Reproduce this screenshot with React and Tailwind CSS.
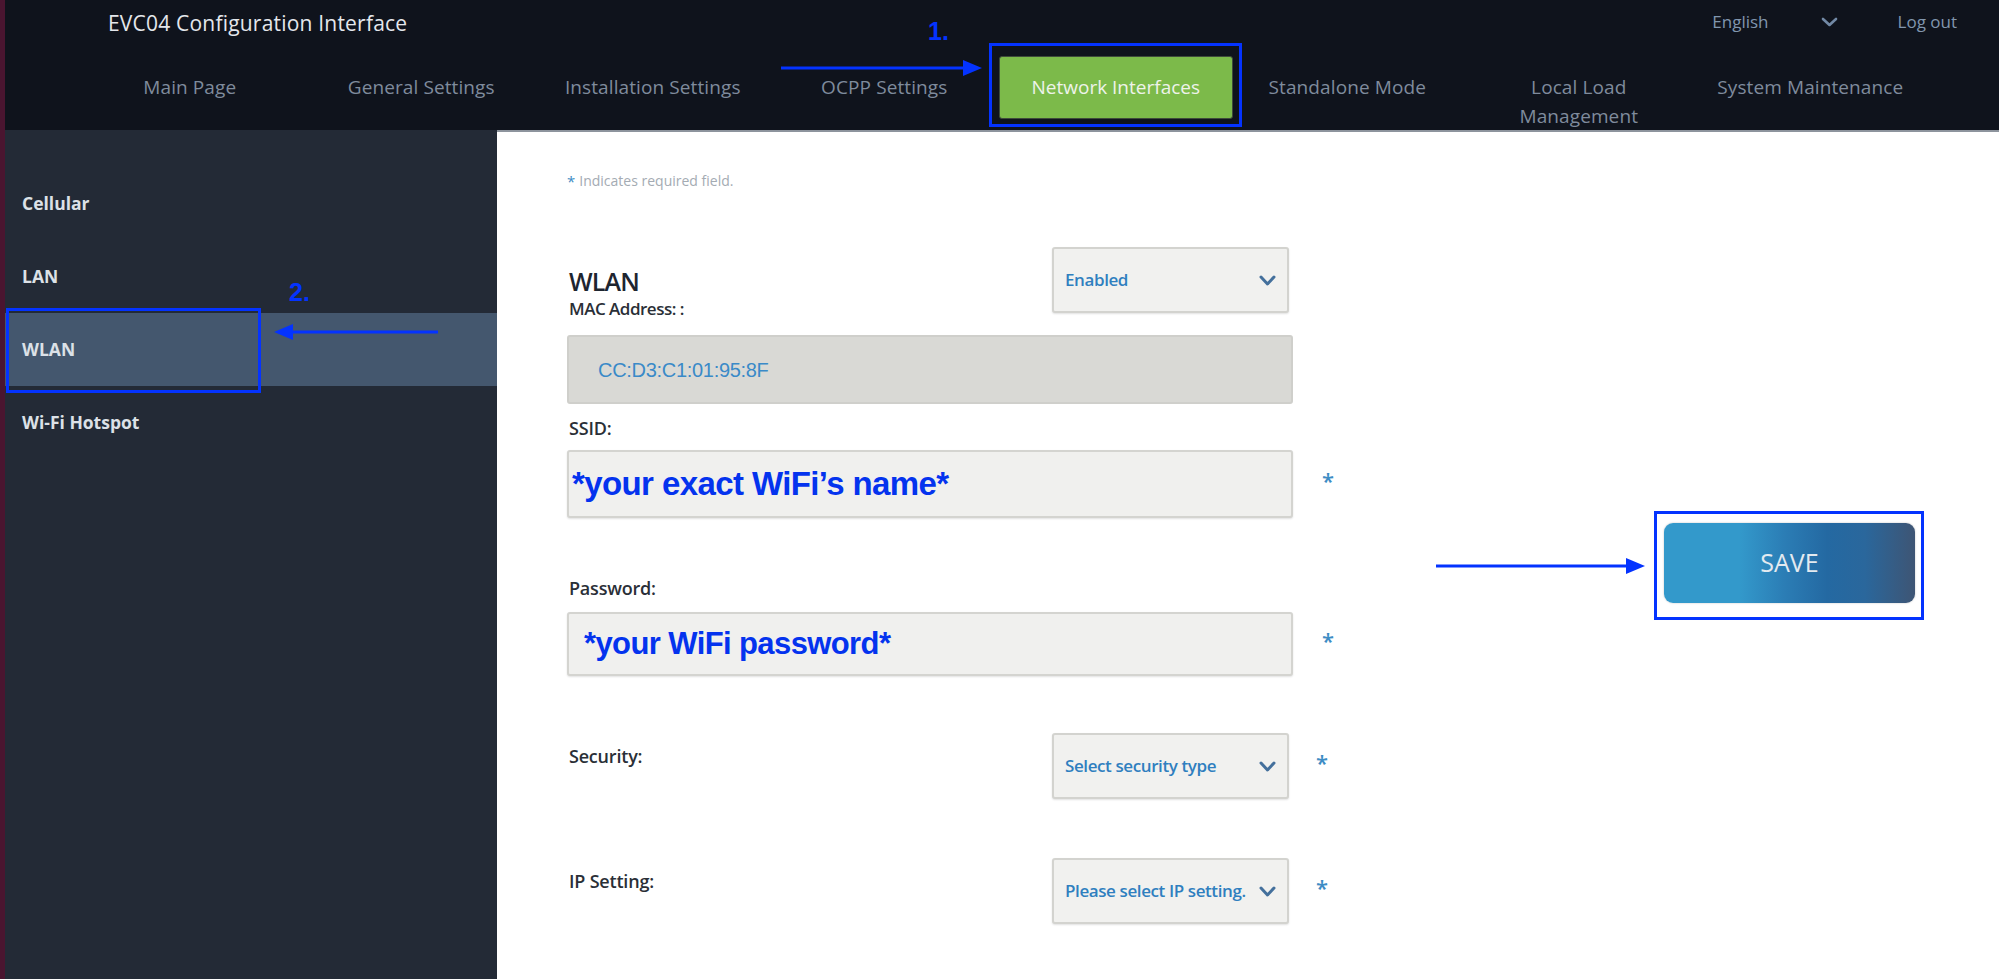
import React from "react";

const navItems = [
  "Main Page",
  "General Settings",
  "Installation Settings",
  "OCPP Settings",
  "Network Interfaces",
  "Standalone Mode",
  "Local Load",
  "System Maintenance",
];

const sideItems = ["Cellular", "LAN", "WLAN", "Wi-Fi Hotspot"];

function Chevron({ className = "", w = 15, h = 10, stroke = 3 }) {
  return (
    <svg width={w} height={h} viewBox={`0 0 ${w} ${h}`} className={className}>
      <path
        d={`M2 2 L${w / 2} ${h - 2} L${w - 2} 2`}
        fill="none"
        stroke="currentColor"
        strokeWidth={stroke}
        strokeLinecap="round"
        strokeLinejoin="round"
      />
    </svg>
  );
}

function Arrow({ width, left = false }) {
  // annotation arrow, 3px line with a solid head
  return (
    <svg width={width} height="18" viewBox={`0 0 ${width} 18`} className="block">
      {left ? (
        <>
          <line x1="16" y1="9" x2={width} y2="9" stroke="#0433ff" strokeWidth="3" />
          <polygon points={`0,9 19,1 19,17`} fill="#0433ff" />
        </>
      ) : (
        <>
          <line x1="0" y1="9" x2={width - 16} y2="9" stroke="#0433ff" strokeWidth="3" />
          <polygon points={`${width},9 ${width - 19},1 ${width - 19},17`} fill="#0433ff" />
        </>
      )}
    </svg>
  );
}

function Select({ text }) {
  return (
    <div className="flex h-[66px] w-[237px] items-center justify-between rounded-[3px] border-2 border-[#d3d3cf] bg-[#f1f1ef] pl-[11px] pr-[11px] shadow-[0_1px_2px_rgba(0,0,0,0.12)]">
      <span className="whitespace-nowrap text-[17px] font-semibold tracking-[-0.4px] text-[#2f7fbf]">{text}</span>
      <Chevron className="shrink-0 text-[#44709c]" w={17} h={11} stroke={3} />
    </div>
  );
}

function Star({ className = "" }) {
  return <span className={`mb-[8px] text-[22px] font-semibold text-[#3d8cc4] ${className}`}>*</span>;
}

const label = "pl-[2px] text-[18px] font-semibold leading-[20px] tracking-[-0.2px] text-[#2a2f37]";

export default function App() {
  return (
    <div className="flex h-[979px] w-[1999px] overflow-hidden bg-white font-['Open_Sans',sans-serif]">
      <div className="w-[5px] bg-[#4a1530]" />
      <div className="flex flex-1 flex-col">
        {/* Header */}
        <header className="relative h-[130px] overflow-hidden bg-[#0f131c]">
          <div className="flex h-[58px] items-start justify-between">
            <div className="ml-[103px] mt-[9px] text-[21px] leading-[28px] tracking-[0.2px] text-[#e4e7ec]">
              EVC04 Configuration Interface
            </div>
            <div className="mr-[42px] mt-[10px] flex items-center text-[17px] leading-[24px] text-[#8196ae]">
              <span>English</span>
              <Chevron className="ml-[52px] text-[#7289a5]" w={17} h={10} stroke={2.6} />
              <span className="ml-[60px]">Log out</span>
            </div>
          </div>
          <nav className="mt-[-2px] grid w-[1921px] grid-cols-8 pl-[69px]">
            {navItems.map((item) =>
              item === "Network Interfaces" ? (
                <div key={item} className="flex justify-center">
                  <div className="flex h-[63px] w-[234px] shrink-0 items-center justify-center rounded-[3px] border border-[#3e4a3a] bg-[#7cba4a] text-[19px] text-[#eef3ea]">
                    {item}
                  </div>
                </div>
              ) : item === "Local Load" ? (
                <div key={item} className="mt-[15px] whitespace-nowrap text-center text-[19px] tracking-[0.1px] text-[#7f8b9c]">
                  <div className="leading-[32px]">Local Load</div>
                  <div className="mt-[3px] leading-[20px]">Management</div>
                </div>
              ) : (
                <div key={item} className="mt-[15px] whitespace-nowrap text-center text-[19px] leading-[32px] tracking-[0.1px] text-[#7f8b9c]">
                  {item}
                </div>
              )
            )}
          </nav>

          {/* annotation 1 */}
          <span className="absolute left-[923px] top-[17px] font-['Liberation_Sans',sans-serif] text-[25px] font-semibold leading-[28px] text-[#0433ff]">
            1.
          </span>
          <div className="absolute left-[776px] top-[59px]">
            <Arrow width={201} />
          </div>
          <div className="absolute left-[984px] top-[43px] h-[84px] w-[253px] border-[3px] border-[#0433ff]" />
        </header>

        <div className="flex h-[849px]">
          {/* Sidebar */}
          <aside className="relative w-[492px] bg-[#232a36] pt-[37px]">
            {sideItems.map((item) => (
              <div
                key={item}
                className={`flex h-[73px] items-center pl-[17px] text-[17.5px] font-bold text-[#dce1e7] ${
                  item === "WLAN" ? "bg-[#44576e]" : ""
                }`}
              >
                {item}
              </div>
            ))}

            {/* annotation 2 */}
            <span className="absolute left-[284px] top-[148px] font-['Liberation_Sans',sans-serif] text-[25px] font-bold leading-[28px] text-[#0433ff]">
              2.
            </span>
            <div className="absolute left-[269px] top-[193px]">
              <Arrow width={164} left />
            </div>
            <div className="absolute left-[1px] top-[178px] h-[85px] w-[255px] border-[3px] border-[#0433ff]" />
          </aside>

          {/* Main */}
          <main className="flex flex-1 border-t-2 border-[#8d949d] pl-[70px] pt-[39px]">
            <div className="w-[800px]">
              <div className="flex items-start text-[14px] leading-[20px] text-[#a4abb3]">
                <span className="mr-[4px] text-[15px] text-[#3d8cc4]">*</span>
                Indicates required field.
              </div>

              <div className="mt-[56px] flex w-[726px] items-start justify-between">
                <div className="pl-[2px] pt-[21px]">
                  <div className="text-[25px] font-semibold leading-[27px] tracking-[-0.8px] text-[#1e2530]">WLAN</div>
                  <div className="mt-[4px] text-[17px] font-semibold leading-[20px] tracking-[-0.5px] text-[#2a2f37]">
                    MAC Address: :
                  </div>
                </div>
                <div className="mr-[4px]">
                  <Select text="Enabled" />
                </div>
              </div>

              <div className="mt-[16px] flex h-[69px] w-[726px] items-center rounded-[3px] border-2 border-[#cfcfcb] bg-[#d9d9d5] pl-[29px] font-['Liberation_Sans',sans-serif] text-[20px] tracking-[-0.3px] text-[#3a8ac8]">
                CC:D3:C1:01:95:8F
              </div>

              <div className={`mt-[14px] ${label}`}>SSID:</div>
              <div className="mt-[12px] flex items-center">
                <div className="flex h-[68px] w-[726px] items-center rounded-[3px] border-2 border-[#d4d4d0] bg-[#f0f0ee] pl-[3px] font-['Liberation_Sans',sans-serif] text-[33px] font-bold tracking-[-0.6px] text-[#0433ee] shadow-[0_1px_2px_rgba(0,0,0,0.12)]">
                  *your exact WiFi’s name*
                </div>
                <Star className="ml-[29px]" />
              </div>

              <div className={`mt-[60px] ${label}`}>Password:</div>
              <div className="mt-[14px] flex items-center">
                <div className="flex h-[64px] w-[726px] items-center rounded-[3px] border-2 border-[#d4d4d0] bg-[#f0f0ee] pl-[15px] font-['Liberation_Sans',sans-serif] text-[31px] font-bold tracking-[-0.6px] text-[#0433ee] shadow-[0_1px_2px_rgba(0,0,0,0.12)]">
                  *your WiFi password*
                </div>
                <Star className="ml-[29px]" />
              </div>

              <div className="mt-[57px] flex items-center">
                <div className="flex w-[722px] items-start justify-between">
                  <div className={`pt-[13px] ${label}`}>Security:</div>
                  <Select text="Select security type" />
                </div>
                <Star className="ml-[27px]" />
              </div>

              <div className="mt-[59px] flex items-center">
                <div className="flex w-[722px] items-start justify-between">
                  <div className={`pt-[13px] ${label}`}>IP Setting:</div>
                  <Select text="Please select IP setting." />
                </div>
                <Star className="ml-[27px]" />
              </div>
            </div>

            {/* Save with annotation 3 */}
            <div className="ml-[69px] mt-[340px] flex items-center self-start">
              <Arrow width={209} />
              <div className="ml-[9px] border-[3px] border-[#0433ff] pb-[14px] pl-[7px] pr-[6px] pt-[9px]">
                <button className="flex h-[80px] w-[251px] items-center justify-center rounded-[9px] bg-[linear-gradient(90deg,#3399cb_0%,#3399cb_30%,#2b7db5_48%,#2469a2_65%,#2a679c_80%,#3e5574_100%)] text-[25px] text-[#e3eaf0] shadow-[0_0_2px_rgba(0,0,0,0.25)]">
                  SAVE
                </button>
              </div>
            </div>
          </main>
        </div>
      </div>
    </div>
  );
}
